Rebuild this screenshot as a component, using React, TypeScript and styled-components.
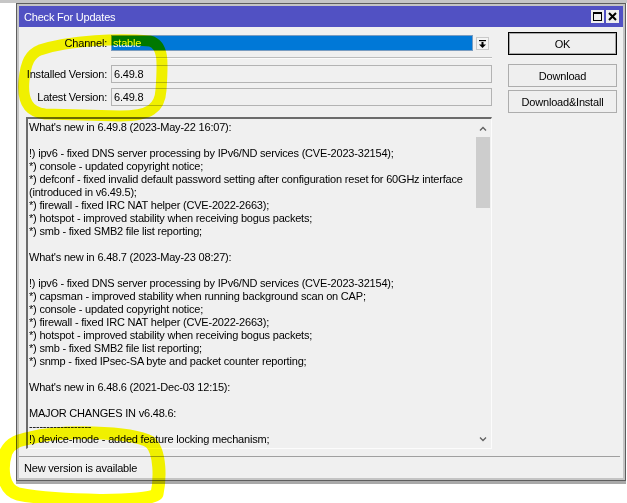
import React from 'react';
import styled, { createGlobalStyle } from 'styled-components';

const GlobalStyle = createGlobalStyle`
  html, body {
    margin: 0;
    padding: 0;
    background: #fff;
  }
  body {
    font-family: "Liberation Sans", Arial, sans-serif;
    font-size: 11px;
    letter-spacing: -0.2px;
    color: #000;
  }
`;

const Page = styled.div`
  position: relative;
  width: 627px;
  height: 503px;
  overflow: hidden;
  box-sizing: border-box;
  padding: 3px 0 0 16px;
  background: linear-gradient(#c6c6c6 0 3px, #fff 3px);
`;

const Window = styled.div`
  width: 610px;
  height: 478px;
  box-sizing: border-box;
  border: 1px solid #5e5e5e;
  padding: 2px;
  background: #c4c4c4;
  box-shadow: 0 3px 0 #a9a9a9;
  display: flex;
  flex-direction: column;
`;

const TitleBar = styled.div`
  height: 21px;
  flex: none;
  display: flex;
  align-items: center;
  padding: 0 4px 0 5px;
  background: #5151c3;
  color: #fff;
`;

const Title = styled.span`
  flex: 1;
`;

const TitleButtons = styled.div`
  display: flex;
  gap: 2px;
`;

const TitleButton = styled.div`
  width: 13px;
  height: 13px;
  background: #f0f0f0;
  display: flex;
  align-items: center;
  justify-content: center;
`;

const Frame = styled.div`
  flex: 1;
  display: flex;
  flex-direction: column;
  background: #f0f0f0;
`;

const Body = styled.div`
  display: grid;
  grid-template-columns: 466px 109px;
  column-gap: 16px;
  padding: 5px 0 0 7px;
`;

const LeftCol = styled.div`
  display: flex;
  flex-direction: column;
`;

const Row = styled.div<{ $top: number; $h: number }>`
  display: grid;
  grid-template-columns: 81px 381px;
  column-gap: 4px;
  margin-top: ${(p) => p.$top}px;
  height: ${(p) => p.$h}px;
  align-items: center;
`;

const Label = styled.div`
  display: flex;
  justify-content: flex-end;
  white-space: nowrap;
`;

const ChannelField = styled.div`
  display: grid;
  grid-template-columns: 1fr 13px;
  column-gap: 3px;
  padding-right: 3px;
  height: 100%;
`;

const Select = styled.div`
  background: #0078d7;
  border: 1px solid #7a9cc0;
  color: #fff;
  padding-left: 1px;
  line-height: 14px;
`;

const DropButton = styled.div`
  margin-top: 2px;
  height: 13px;
  border: 1px solid #c9c9c9;
  box-sizing: border-box;
  background: #f4f4f4;
  display: flex;
  align-items: center;
  justify-content: center;
`;

const Separator = styled.div`
  margin: 6px 0 0 85px;
  height: 1px;
  background: #bdbdbd;
  border-bottom: 1px solid #fbfbfb;
`;

const VersionField = styled.div`
  height: 100%;
  box-sizing: border-box;
  border: 1px solid #b3b3b3;
  background: #f0f0f0;
  padding-left: 2px;
  line-height: 16px;
`;

const TextBox = styled.div`
  margin-top: 11px;
  height: 332px;
  box-sizing: border-box;
  border-top: 2px solid #6b6b6b;
  border-left: 2px solid #6b6b6b;
  border-right: 1px solid #fcfcfc;
  border-bottom: 1px solid #fcfcfc;
  display: grid;
  grid-template-columns: 1fr 16px;
  overflow: hidden;
`;

const Notes = styled.div`
  padding: 2px 0 0 1px;
  white-space: pre;
  line-height: 13px;
  overflow: hidden;
`;

const ScrollBar = styled.div`
  display: flex;
  flex-direction: column;
  background: #f0f0f0;
`;

const ScrollArrow = styled.div<{ $h: number }>`
  height: ${(p) => p.$h}px;
  display: flex;
  align-items: center;
  justify-content: center;
`;

const Thumb = styled.div`
  height: 71px;
  margin: 0 1px;
  background: #cdcdcd;
`;

const Track = styled.div`
  flex: 1;
`;

const RightCol = styled.div`
  display: flex;
  flex-direction: column;
`;

const Button = styled.div<{ $top: number; $focused?: boolean }>`
  margin-top: ${(p) => p.$top}px;
  height: 23px;
  box-sizing: border-box;
  border: 1px solid ${(p) => (p.$focused ? '#000' : '#adadad')};
  box-shadow: ${(p) => (p.$focused ? 'inset 0 0 0 1px rgba(0,0,0,0.3)' : 'none')};
  background: #efefef;
  display: flex;
  align-items: center;
  justify-content: center;
`;

const StatusBar = styled.div`
  margin-top: auto;
  height: 22px;
  box-sizing: border-box;
  border-top: 1px solid #a0a0a0;
  margin-right: 3px;
  padding-left: 5px;
  display: flex;
  align-items: center;
`;

const Marker = styled.svg`
  position: absolute;
  top: 0;
  left: 0;
  pointer-events: none;
  mix-blend-mode: multiply;
`;

const notes = [
  "What's new in 6.49.8 (2023-May-22 16:07):",
  '',
  '!) ipv6 - fixed DNS server processing by IPv6/ND services (CVE-2023-32154);',
  '*) console - updated copyright notice;',
  '*) defconf - fixed invalid default password setting after configuration reset for 60GHz interface',
  '(introduced in v6.49.5);',
  '*) firewall - fixed IRC NAT helper (CVE-2022-2663);',
  '*) hotspot - improved stability when receiving bogus packets;',
  '*) smb - fixed SMB2 file list reporting;',
  '',
  "What's new in 6.48.7 (2023-May-23 08:27):",
  '',
  '!) ipv6 - fixed DNS server processing by IPv6/ND services (CVE-2023-32154);',
  '*) capsman - improved stability when running background scan on CAP;',
  '*) console - updated copyright notice;',
  '*) firewall - fixed IRC NAT helper (CVE-2022-2663);',
  '*) hotspot - improved stability when receiving bogus packets;',
  '*) smb - fixed SMB2 file list reporting;',
  '*) snmp - fixed IPsec-SA byte and packet counter reporting;',
  '',
  "What's new in 6.48.6 (2021-Dec-03 12:15):",
  '',
  'MAJOR CHANGES IN v6.48.6:',
  '------------------',
  '!) device-mode - added feature locking mechanism;',
];

const Chevron: React.FC<{ up?: boolean }> = ({ up }) => (
  <svg width="8" height="5" viewBox="0 0 8 5">
    <path
      d={up ? 'M1 4.5 L4 1.5 L7 4.5' : 'M1 0.5 L4 3.5 L7 0.5'}
      fill="none"
      stroke="#606060"
      strokeWidth="1.3"
    />
  </svg>
);

const App: React.FC = () => {
  return (
    <Page>
      <GlobalStyle />
      <Window>
        <TitleBar>
          <Title>Check For Updates</Title>
          <TitleButtons>
            <TitleButton>
              <svg width="9" height="9" viewBox="0 0 9 9">
                <rect x="0.5" y="0.5" width="8" height="8" fill="none" stroke="#000" />
                <rect x="0" y="0" width="9" height="2" fill="#000" />
              </svg>
            </TitleButton>
            <TitleButton>
              <svg width="9" height="9" viewBox="0 0 9 9">
                <path d="M1 1 L8 8 M8 1 L1 8" stroke="#000" strokeWidth="2" />
              </svg>
            </TitleButton>
          </TitleButtons>
        </TitleBar>
        <Frame>
          <Body>
            <LeftCol>
              <Row $top={3} $h={16}>
                <Label>Channel:</Label>
                <ChannelField>
                  <Select>stable</Select>
                  <DropButton>
                    <svg width="7" height="8" viewBox="0 0 7 8">
                      <rect x="0" y="0" width="7" height="1.2" fill="#000" />
                      <rect x="2.5" y="2" width="2" height="3" fill="#000" />
                      <path d="M0 4.5 L7 4.5 L3.5 8 Z" fill="#000" />
                    </svg>
                  </DropButton>
                </ChannelField>
              </Row>
              <Separator />
              <Row $top={6} $h={18}>
                <Label>Installed Version:</Label>
                <VersionField>6.49.8</VersionField>
              </Row>
              <Row $top={5} $h={18}>
                <Label>Latest Version:</Label>
                <VersionField>6.49.8</VersionField>
              </Row>
              <TextBox>
                <Notes>{notes.join('\n')}</Notes>
                <ScrollBar>
                  <ScrollArrow $h={18}>
                    <Chevron up />
                  </ScrollArrow>
                  <Thumb />
                  <Track />
                  <ScrollArrow $h={18}>
                    <Chevron />
                  </ScrollArrow>
                </ScrollBar>
              </TextBox>
            </LeftCol>
            <RightCol>
              <Button $top={0} $focused>OK</Button>
              <Button $top={9}>Download</Button>
              <Button $top={3}>Download&amp;Install</Button>
            </RightCol>
          </Body>
          <StatusBar>New version is available</StatusBar>
        </Frame>
      </Window>
      <Marker width="627" height="503" viewBox="0 0 627 503">
        <path
          d="M40 50 C70 40 120 38 150 41 C164 45 163 62 161 90 C160 108 150 116 120 116 L45 114 C28 112 22 100 24 80 C26 62 30 54 40 50 Z"
          fill="none"
          stroke="#ffff00"
          strokeWidth="11"
          strokeLinejoin="round"
        />
        <path
          d="M30 438 C60 430 130 431 150 442 C161 452 160 480 157 494 C148 503 60 502 18 494 C2 489 1 468 6 452 C11 442 20 440 30 438 Z"
          fill="none"
          stroke="#ffff00"
          strokeWidth="13"
          strokeLinejoin="round"
        />
      </Marker>
    </Page>
  );
};

export default App;
